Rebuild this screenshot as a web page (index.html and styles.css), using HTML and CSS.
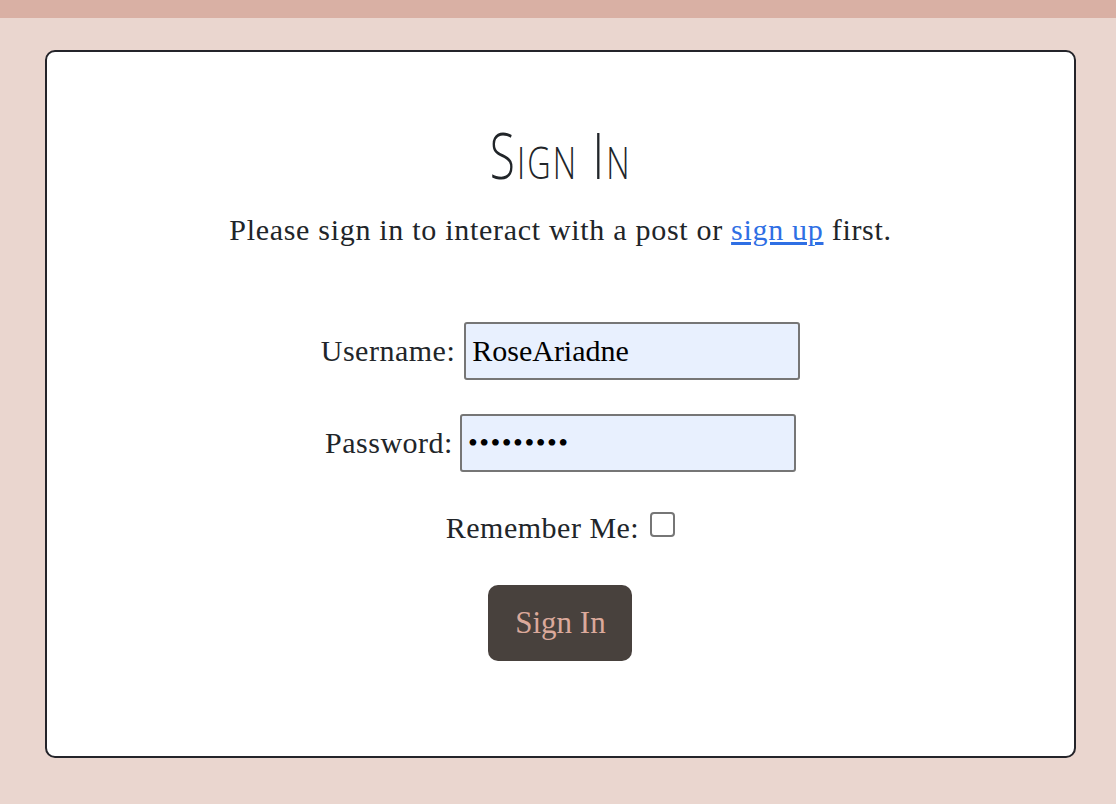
FILE: index.html
```html
<!DOCTYPE html>
<html lang="en">
<head>
<meta charset="utf-8">
<title>Sign In</title>
<link rel="stylesheet" href="styles.css">
</head>
<body>
<div class="topbar"></div>
<main class="page">
  <section class="card">
    <h1 class="title">Sign In</h1>
    <p class="lead">Please sign in to interact with a post or <a href="#">sign up</a> first.</p>
    <form class="form">
      <div class="row">
        <label for="u">Username:</label>
        <input id="u" class="field" type="text" value="RoseAriadne">
      </div>
      <div class="row row-pass">
        <label for="p">Password:</label>
        <input id="p" class="field" type="password" value="123456789">
      </div>
      <div class="row row-check">
        <label for="r">Remember Me:</label>
        <span class="check"></span>
      </div>
      <button type="button" class="btn">Sign In</button>
    </form>
  </section>
</main>
</body>
</html>
```

FILE: styles.css
```css
html, body {
  margin: 0;
  padding: 0;
}
body {
  background: #ead6cf;
  font-family: "Liberation Serif", "DejaVu Serif", serif;
  color: #212529;
  height: 804px;
  overflow: hidden;
}
.topbar {
  height: 18px;
  background: #d9b0a4;
}
.page {
  padding: 32px 40px 0 45px;
}
.card {
  box-sizing: border-box;
  width: 1031px;
  height: 708px;
  background: #fff;
  border: 2px solid #24242a;
  border-radius: 10px;
  display: flex;
  flex-direction: column;
  align-items: center;
  padding-top: 68px;
}
.title {
  margin: 0;
  font-family: "Open Sans", sans-serif;
  font-weight: 300;
  font-variant: small-caps;
  font-size: 64px;
  line-height: 70px;
  transform: scaleX(0.72);
  letter-spacing: 3px;
  color: #212529;
}
.lead {
  margin: 22px 0 0;
  font-size: 30px;
  line-height: 36px;
  letter-spacing: 0.7px;
}
.lead a {
  color: #2f6fe4;
  text-decoration: underline;
}
.form {
  margin-top: 74px;
  display: flex;
  flex-direction: column;
  align-items: center;
}
.row {
  display: flex;
  align-items: center;
  gap: 9px;
  font-size: 30px;
  letter-spacing: 0.5px;
  margin-bottom: 34px;
}
.row-pass {
  gap: 7px;
  margin-bottom: 39px;
}
.row-check {
  gap: 11px;
  margin-bottom: 40px;
}
.field {
  box-sizing: border-box;
  width: 336px;
  height: 58px;
  background: #e8f0fe;
  border: 2px solid #767676;
  border-radius: 3px;
  padding: 0 6px;
  font-family: "Liberation Serif", serif;
  font-size: 30px;
  letter-spacing: 0;
  color: #000;
}
.field[type="password"] {
  font-size: 28px;
  letter-spacing: 1.5px;
}
.check {
  display: inline-block;
  box-sizing: border-box;
  width: 25px;
  height: 25px;
  border: 2px solid #767676;
  border-radius: 4px;
  margin-top: -8px;
}
.btn {
  width: 144px;
  height: 76px;
  background: #48413d;
  color: #dba99b;
  border: none;
  border-radius: 10px;
  font-family: "Liberation Serif", serif;
  font-size: 31px;
}
```
